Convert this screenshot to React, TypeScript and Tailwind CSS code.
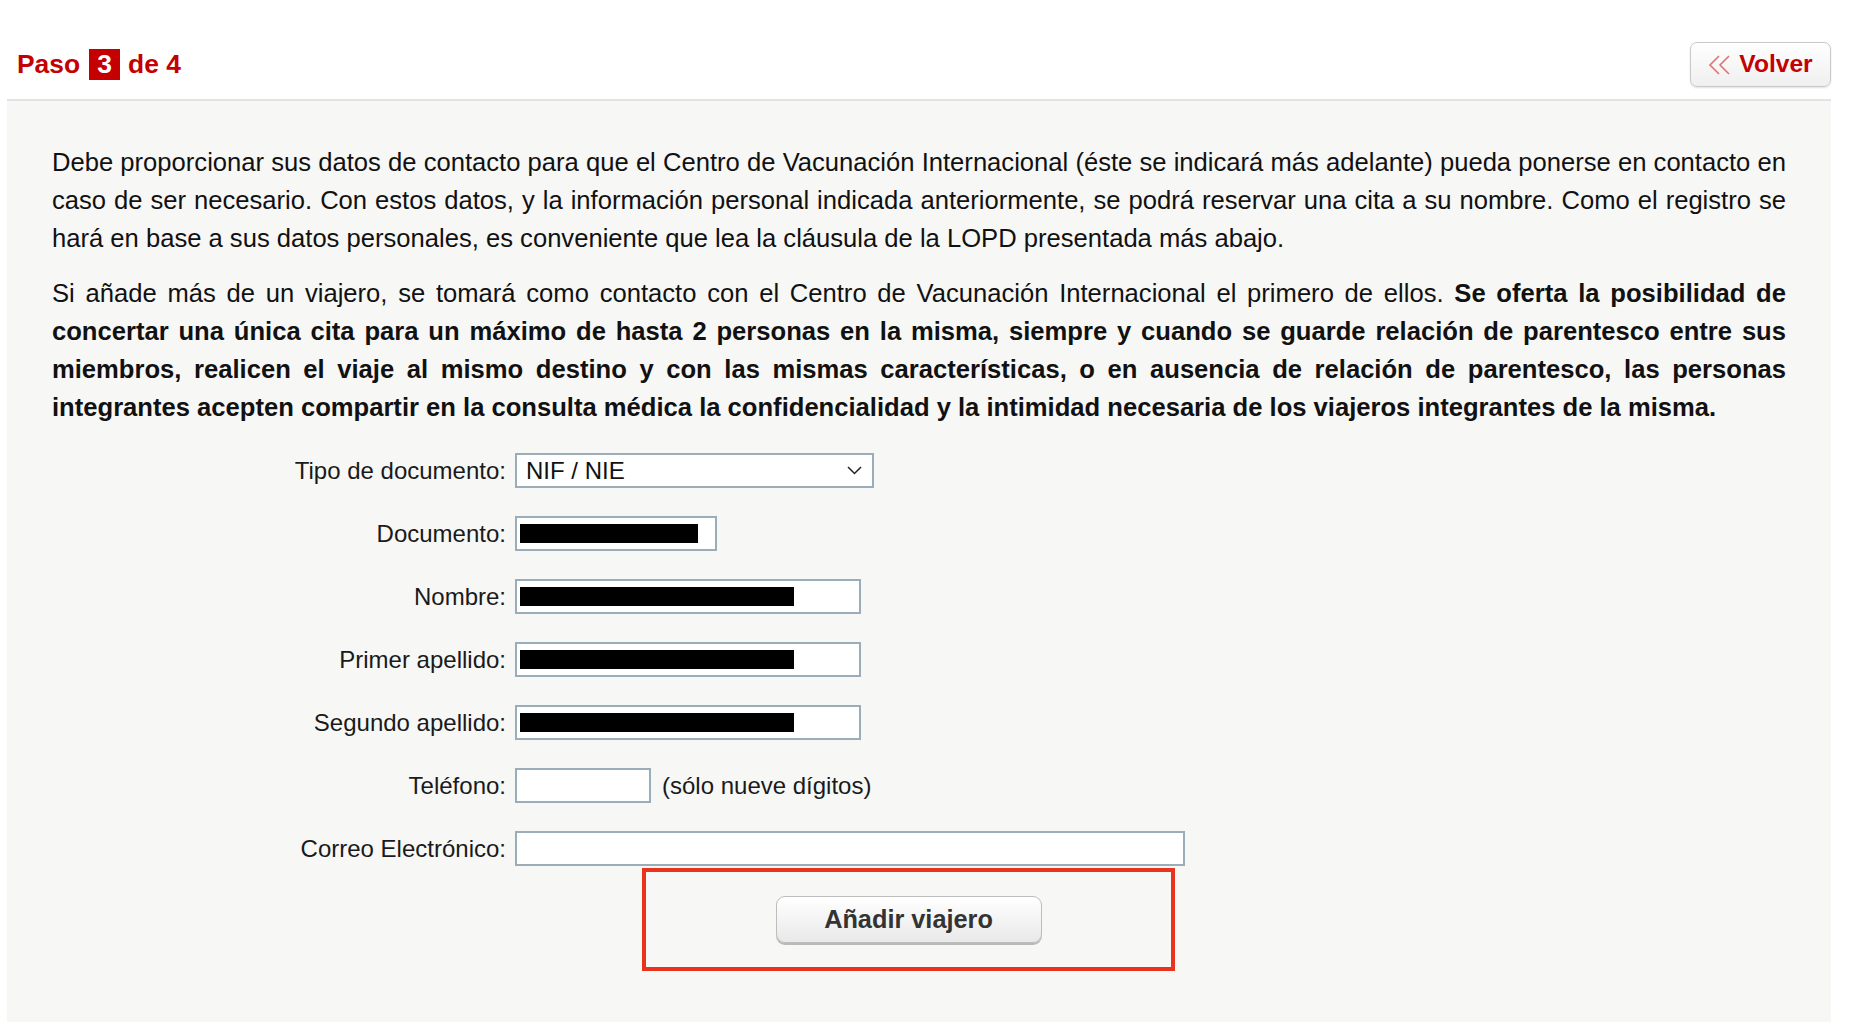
import React from 'react';

const font = { fontFamily: '"Liberation Sans", Arial, Helvetica, sans-serif' };

const Redacted = ({ w }: { w: number }) => (
  <div className="h-[19px] bg-black ml-[3px]" style={{ width: w }} />
);

interface RowProps {
  label: string;
  children: React.ReactNode;
}

const FormRow: React.FC<RowProps> = ({ label, children }) => (
  <div className="flex items-center h-[35px]">
    <div className="w-[463px] pr-[9px] text-right text-[24px] text-[#1a1a1a] leading-none">{label}</div>
    {children}
  </div>
);

const inputBox = 'h-[35px] border-2 border-[#9cadba] bg-white flex items-center';

export default function App() {
  return (
    <div className="min-h-[1024px] bg-white" style={font}>
      <div className="ml-[7px] w-[1824px]">
        {/* header */}
        <div className="h-[99px] pt-[30px] flex items-center justify-between">
          <div className="flex items-center pl-[10px] text-[26.4px] font-bold text-[#c40000] leading-none">
            <span>Paso</span>
            <span className="ml-[9px] mr-[8px] w-[31px] h-[31px] bg-[#c40000] text-white flex items-center justify-center">3</span>
            <span>de 4</span>
          </div>
          <button className="h-[45px] w-[141px] rounded-[7px] border border-[#c9c9c9] bg-gradient-to-b from-white to-[#efefef] shadow-[0_1px_2px_rgba(0,0,0,0.12)] flex items-center justify-center gap-[7px] text-[24.6px] font-bold text-[#c40000] leading-none">
            <svg width="24" height="20" viewBox="0 0 24 20" fill="none" stroke="#e07272" strokeWidth="1.6" strokeLinejoin="miter">
              <polyline points="11,1 2,10 11,19" />
              <polyline points="21,1 12,10 21,19" />
            </svg>
            <span>Volver</span>
          </button>
        </div>

        {/* panel */}
        <div className="border-t-2 border-[#e3e3e3] bg-[#f7f7f6] min-h-[923px] px-[45px] pt-[42px] text-[#111]">
          <p className="text-[25.6px] leading-[38px] text-justify">
            Debe proporcionar sus datos de contacto para que el Centro de Vacunación Internacional (éste se indicará más adelante) pueda ponerse en contacto en caso de ser necesario. Con estos datos, y la información personal indicada anteriormente, se podrá reservar una cita a su nombre. Como el registro se hará en base a sus datos personales, es conveniente que lea la cláusula de la LOPD presentada más abajo.
          </p>
          <p className="mt-[17px] text-[25.6px] leading-[38px] text-justify">
            Si añade más de un viajero, se tomará como contacto con el Centro de Vacunación Internacional el primero de ellos.{' '}
            <b>
              Se oferta la posibilidad de concertar una única cita para un máximo de hasta 2 personas en la misma, siempre y cuando se guarde relación de parentesco entre sus miembros, realicen el viaje al mismo destino y con las mismas características, o en ausencia de relación de parentesco, las personas integrantes acepten compartir en la consulta médica la confidencialidad y la intimidad necesaria de los viajeros integrantes de la misma.
            </b>
          </p>

          {/* form */}
          <div className="mt-[27px] flex flex-col gap-[28px]">
            <FormRow label="Tipo de documento:">
              <div className={`${inputBox} w-[359px] justify-between pl-[9px] pr-[10px]`}>
                <span className="text-[24px] leading-none text-[#111]">NIF / NIE</span>
                <svg width="15" height="9" viewBox="0 0 15 9" fill="none" stroke="#222" strokeWidth="1.5">
                  <polyline points="1,1 7.5,7.5 14,1" />
                </svg>
              </div>
            </FormRow>
            <FormRow label="Documento:">
              <div className={`${inputBox} w-[202px]`}>
                <Redacted w={178} />
              </div>
            </FormRow>
            <FormRow label="Nombre:">
              <div className={`${inputBox} w-[346px]`}>
                <Redacted w={274} />
              </div>
            </FormRow>
            <FormRow label="Primer apellido:">
              <div className={`${inputBox} w-[346px]`}>
                <Redacted w={274} />
              </div>
            </FormRow>
            <FormRow label="Segundo apellido:">
              <div className={`${inputBox} w-[346px]`}>
                <Redacted w={274} />
              </div>
            </FormRow>
            <FormRow label="Teléfono:">
              <div className={`${inputBox} w-[136px]`} />
              <span className="ml-[11px] text-[24px] leading-none text-[#1a1a1a]">(sólo nueve dígitos)</span>
            </FormRow>
            <FormRow label="Correo Electrónico:">
              <div className={`${inputBox} w-[670px]`} />
            </FormRow>
          </div>

          <div className="mt-[2px] ml-[590px] w-[533px] h-[103px] border-4 border-[#e8341c] flex items-center justify-center">
            <button className="w-[266px] h-[47px] rounded-[9px] border border-[#bdbdbd] bg-gradient-to-b from-white to-[#e9e9e9] shadow-[0_2px_0_#b9b9b9] text-[25.3px] font-bold text-[#333] leading-none">
              Añadir viajero
            </button>
          </div>
        </div>
      </div>
    </div>
  );
}
